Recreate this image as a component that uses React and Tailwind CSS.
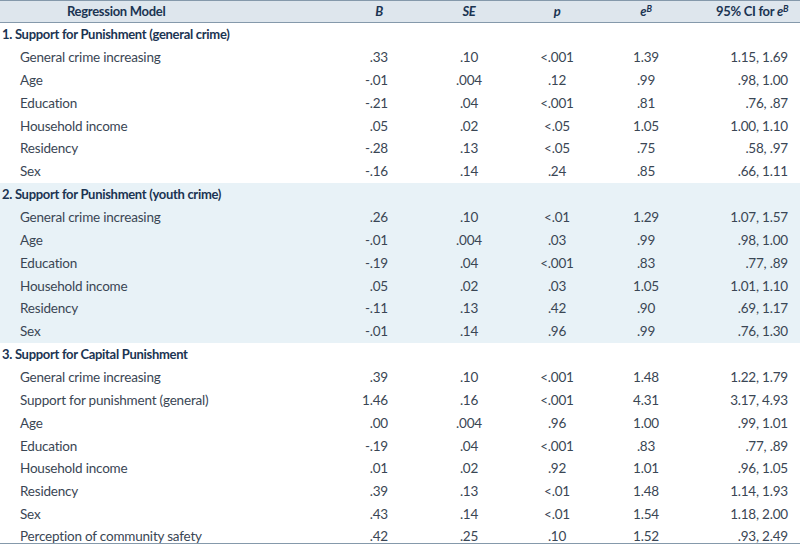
import React from "react";

const sections = [
  {
    title: "1. Support for Punishment (general crime)",
    shaded: false,
    rows: [
      ["General crime increasing", ".33", ".10", "<.001", "1.39", "1.15, 1.69"],
      ["Age", "-.01", ".004", ".12", ".99", ".98, 1.00"],
      ["Education", "-.21", ".04", "<.001", ".81", ".76, .87"],
      ["Household income", ".05", ".02", "<.05", "1.05", "1.00, 1.10"],
      ["Residency", "-.28", ".13", "<.05", ".75", ".58, .97"],
      ["Sex", "-.16", ".14", ".24", ".85", ".66, 1.11"],
    ],
  },
  {
    title: "2. Support for Punishment (youth crime)",
    shaded: true,
    rows: [
      ["General crime increasing", ".26", ".10", "<.01", "1.29", "1.07, 1.57"],
      ["Age", "-.01", ".004", ".03", ".99", ".98, 1.00"],
      ["Education", "-.19", ".04", "<.001", ".83", ".77, .89"],
      ["Household income", ".05", ".02", ".03", "1.05", "1.01, 1.10"],
      ["Residency", "-.11", ".13", ".42", ".90", ".69, 1.17"],
      ["Sex", "-.01", ".14", ".96", ".99", ".76, 1.30"],
    ],
  },
  {
    title: "3. Support for Capital Punishment",
    shaded: false,
    rows: [
      ["General crime increasing", ".39", ".10", "<.001", "1.48", "1.22, 1.79"],
      ["Support for punishment (general)", "1.46", ".16", "<.001", "4.31", "3.17, 4.93"],
      ["Age", ".00", ".004", ".96", "1.00", ".99, 1.01"],
      ["Education", "-.19", ".04", "<.001", ".83", ".77, .89"],
      ["Household income", ".01", ".02", ".92", "1.01", ".96, 1.05"],
      ["Residency", ".39", ".13", "<.01", "1.48", "1.14, 1.93"],
      ["Sex", ".43", ".14", "<.01", "1.54", "1.18, 2.00"],
      ["Perception of community safety", ".42", ".25", ".10", "1.52", ".93, 2.49"],
    ],
  },
];

function Row({ r, last }) {
  const cls = last
    ? "grid grid-cols-[340px_60px_138px_38px_140px_84px] items-start h-[17.5px]"
    : "grid grid-cols-[340px_60px_138px_38px_140px_84px] items-center h-[22.86px]";
  return (
    <div className={cls}>
      <div className="pl-[20px] whitespace-nowrap">{r[0]}</div>
      <div className="text-right pr-[12px]">{r[1]}</div>
      <div className="text-center whitespace-nowrap">{r[2]}</div>
      <div className="text-center whitespace-nowrap">{r[3]}</div>
      <div className="text-center whitespace-nowrap">{r[4]}</div>
      <div className="text-right pr-[12px] whitespace-nowrap">{r[5]}</div>
    </div>
  );
}

export default function App() {
  return (
    <div
      className="w-[800px] h-[547px] bg-white text-[#3a4654] text-[13.5px] leading-[20px] tracking-[-0.2px] overflow-hidden"
      style={{ fontFamily: "Lato, 'Open Sans', sans-serif" }}
    >
      <div className="border-t-[1.5px] border-b-[1.5px] border-[#8599ab] bg-[#dee6ed] text-[#1b3452] font-bold text-[13px] tracking-[-0.3px] h-[22.7px] grid grid-cols-[340px_60px_138px_38px_140px_84px] items-center">
        <div className="pl-[67px]">Regression Model</div>
        <div className="text-right pr-[17px] italic">B</div>
        <div className="text-center italic">SE</div>
        <div className="text-center italic">p</div>
        <div className="text-center">
          <span className="italic">e</span>
          <sup className="italic text-[9px]">B</sup>
        </div>
        <div className="text-right pr-[12px] whitespace-nowrap">
          95% CI for <span className="italic">e</span>
          <sup className="italic text-[9px]">B</sup>
        </div>
      </div>
      {sections.map((s, i) => (
        <div key={i} className={s.shaded ? "bg-[#e8f2f7]" : ""}>
          <div className="h-[22.86px] flex items-center pl-[2px] font-bold text-[13px] tracking-[-0.3px] text-[#1b3452]">
            {s.title}
          </div>
          {s.rows.map((r, j) => (
            <Row key={j} r={r} last={i === sections.length - 1 && j === s.rows.length - 1} />
          ))}
        </div>
      ))}
      <div className="border-t-[1.5px] border-[#8599ab]" />
    </div>
  );
}
